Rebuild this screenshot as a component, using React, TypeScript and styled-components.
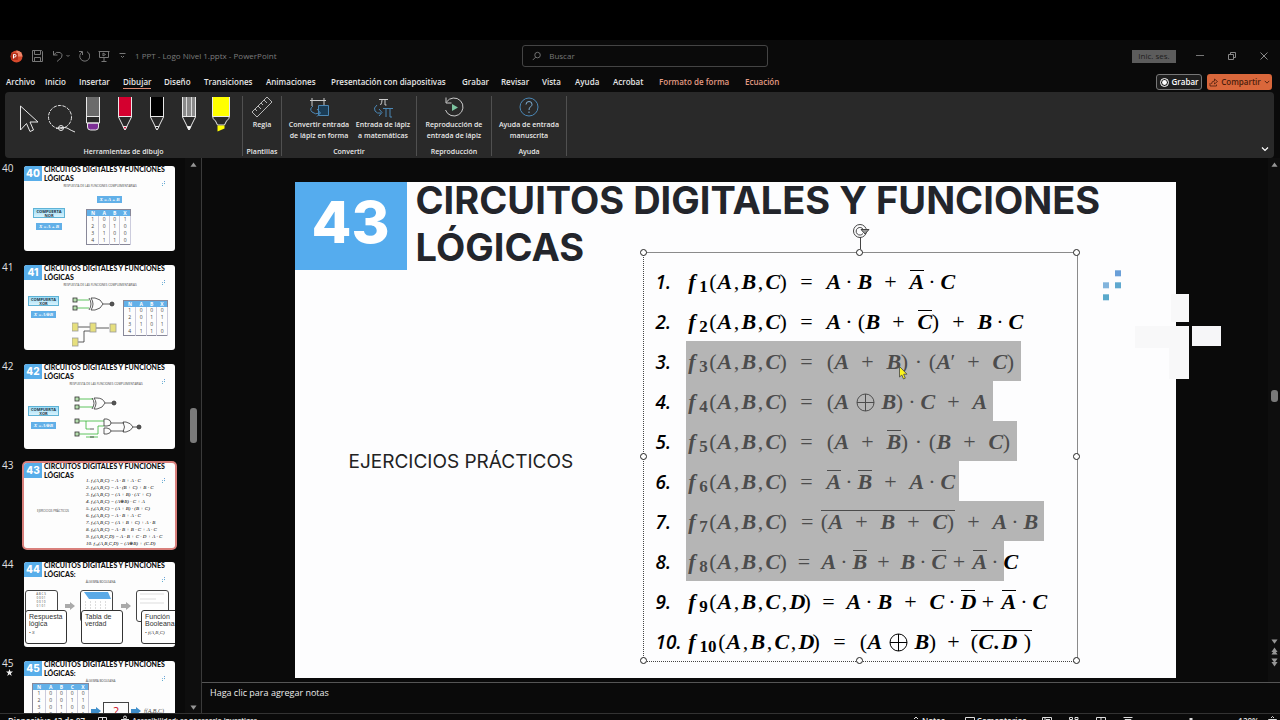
import React from "react";
import styled, { createGlobalStyle, css } from "styled-components";

const UI = `"Open Sans", "Noto Sans", sans-serif`;
const HEAD = `Inter, "Open Sans", sans-serif`;
const MATH = `"Liberation Serif", "DejaVu Sans", serif`;

const GlobalStyle = createGlobalStyle`
  * { box-sizing: border-box; }
  html, body { margin: 0; background: #000; overflow: hidden; }
  body { font-family: ${UI}; color: #e8e8e8; }
  button { font: inherit; color: inherit; background: none; border: 0; padding: 0; margin: 0; }
`;

/* ---------- window frame ---------- */

const Screen = styled.div`
  display: flex;
  flex-direction: column;
  min-height: calc(100vh + 16px);
  padding-top: 40px;
  background: linear-gradient(#000 40px, #0a0a0a 40px);
`;

const TitleBar = styled.header`
  display: grid;
  grid-template-columns: minmax(0, 1fr) 246px minmax(0, 1fr);
  align-items: center;
  height: 32px;
  padding-left: 10px;
  color: #7c7c7c;
`;

const QuickAccess = styled.div`
  display: flex;
  align-items: center;
  gap: 8px;
  svg { display: block; }
`;

const DocName = styled.span`
  font-size: 8px;
  line-height: 12px;
  white-space: nowrap;
`;

const SearchBox = styled.label`
  display: flex;
  align-items: center;
  gap: 8px;
  height: 22px;
  padding: 0 9px;
  border: 1px solid #444;
  border-radius: 3px;
  input {
    width: 100%;
    border: 0;
    outline: 0;
    padding: 0;
    background: none;
    color: #777;
    font: 8px/12px ${UI};
  }
  input::placeholder { color: #777; opacity: 1; }
`;

const WindowButtons = styled.div`
  display: flex;
  justify-content: flex-end;
  align-items: center;
  gap: 24px;
  padding-right: 12px;
  button { display: flex; }
`;

const SignIn = styled.button`
  && {
    width: 44px;
    height: 13px;
    margin-right: -4px;
    justify-content: center;
    align-items: center;
    background: #5c5c5c;
    color: #1c1c1c;
    font-size: 8px;
    line-height: 12px;
  }
`;

const TabBar = styled.nav`
  display: flex;
  align-items: center;
  height: 20px;
  padding: 0 8px 0 6px;
`;

const Tab = styled.button<{ $w: number; $active?: boolean; $context?: boolean }>`
  width: ${(p) => p.$w}px;
  flex: none;
  text-align: left;
  white-space: nowrap;
  font-size: 8px;
  line-height: 12px;
  font-weight: 600;
  color: ${(p) => (p.$context ? "#e39a82" : "#e6e6e6")};
  span {
    display: inline-block;
    border-bottom: 1px solid ${(p) => (p.$active ? "#d98a74" : "transparent")};
  }
`;

const TabActions = styled.div`
  display: flex;
  gap: 5px;
  margin-left: auto;
`;

const ActionButton = styled.button<{ $accent?: boolean }>`
  display: flex;
  align-items: center;
  justify-content: center;
  gap: 3px;
  width: ${(p) => (p.$accent ? 65 : 46)}px;
  height: 16px;
  border-radius: 3px;
  font-size: 8px;
  line-height: 12px;
  font-weight: 600;
  ${(p) =>
    p.$accent
      ? css`background: #d9673b; color: #4a1d0c;`
      : css`background: #1e1e1e; border: 1px solid #777; color: #fff;`}
`;

/* ---------- ribbon ---------- */

const Ribbon = styled.section`
  display: flex;
  height: 66px;
  margin: 0 6px 0 5px;
  padding: 4px 0 2px;
  border-radius: 4px;
  background: #292929;
`;

const Group = styled.div<{ $w: number }>`
  display: flex;
  flex-direction: column;
  width: ${(p) => p.$w}px;
  flex: none;
  border-right: 1px solid #505050;
`;

const GroupBody = styled.div`
  display: flex;
  flex: 1;
  justify-content: center;
`;

const GroupLabel = styled.div`
  text-align: center;
  font-size: 7px;
  line-height: 9px;
  font-weight: 600;
  white-space: nowrap;
`;

const PenTray = styled.div`
  display: flex;
  flex: 1;
  padding-left: 8px;
`;

const Pen = styled.button`
  display: flex;
  justify-content: center;
  width: 32px;
  height: 38px;
  svg { flex: none; }
`;

const BigButton = styled.button<{ $w: number }>`
  display: flex;
  flex-direction: column;
  align-items: center;
  width: ${(p) => p.$w}px;
  font-size: 7px;
  line-height: 11px;
  font-weight: 600;
  text-align: center;
  white-space: pre-line;
  svg { display: block; margin-bottom: 1px; }
`;

const Collapse = styled.button`
  align-self: flex-end;
  margin: 0 5px 3px auto;
  svg { display: block; }
`;

/* ---------- workspace ---------- */

const Workspace = styled.main`
  display: flex;
  height: 555px;
`;

const SlidePanel = styled.aside`
  display: flex;
  width: 202px;
  flex: none;
  border-right: 1px solid #3a3a3a;
`;

const ThumbList = styled.ol`
  flex: 1;
  margin: 0;
  padding: 8px 0 0;
  list-style: none;
  overflow: hidden;
`;

const ThumbRow = styled.li`
  display: flex;
  height: 99px;
  padding-left: 2px;
`;

const ThumbNumber = styled.div`
  width: 22px;
  font-size: 10px;
  line-height: 12px;
  margin-top: -4px;
  color: #e0e0e0;
  svg { display: block; margin: 0 0 0 4px; }
`;

const Thumb = styled.div<{ $selected?: boolean }>`
  position: relative;
  width: 151px;
  height: 85px;
  border-radius: 3px;
  overflow: hidden;
  background: #fdfdfd;
  color: #333;
  ${(p) => p.$selected && css`box-shadow: 0 0 0 2px #d9807c;`}
`;

const ThumbHead = styled.div`
  display: flex;
  gap: 2px;
`;

const ThumbBadge = styled.div`
  width: 18px;
  height: 15px;
  flex: none;
  background: #58aeea;
  color: #fff;
  font: 800 10px/14px ${HEAD};
  text-align: center;
`;

const ThumbTitle = styled.div`
  font: 900 7px/9px Lato, ${HEAD};
  margin-top: -1px;
  color: #111;
  white-space: pre;
`;

const Place = styled.div<{ $x: number; $y: number; $w?: number }>`
  position: absolute;
  left: ${(p) => p.$x}px;
  top: ${(p) => p.$y}px;
  ${(p) => p.$w && `width: ${p.$w}px;`}
  svg { display: block; }
`;

const TinyCaption = styled.div`
  font: 3px/4px ${UI};
  color: #444;
  text-align: center;
  white-space: nowrap;
`;

const GateName = styled.div`
  height: 10px;
  padding-top: 1px;
  border: 1px solid #5fb3d6;
  background: linear-gradient(#9bdcf7, #d8f2fc);
  color: #234;
  font: 700 4px/4px ${UI};
  text-align: center;
`;

const GateFormula = styled.div`
  height: 7px;
  background: #62b0e8;
  color: #fff;
  font: italic 700 5px/7px ${MATH};
  text-align: center;
`;

const GateLabel = styled.div`
  font: italic 6px/8px ${MATH};
  color: #444;
`;

const MiniTable = styled.table`
  width: 100%;
  border-collapse: collapse;
  border: 1px solid #889;
  font: 5px/6px ${UI};
  color: #444;
  text-align: center;
  th { background: #62b0e8; color: #fff; padding: 0; font-weight: 700; }
  td { padding: 0 0 1px; border-right: 1px solid #ccd; }
`;

const MiniFormulas = styled.ol`
  margin: 0;
  padding: 0;
  list-style: none;
  font: italic 400 5px/7px ${MATH};
  color: #000;
  white-space: pre;
`;

const CardBack = styled.div`
  width: 33px;
  height: 32px;
  border: 1px solid #444;
  border-radius: 3px;
  background: #fff;
  overflow: hidden;
`;

const CardFront = styled.div`
  width: 42px;
  height: 34px;
  padding: 2px 2px 2px 3px;
  border: 1px solid #333;
  border-radius: 3px;
  background: #fff;
  font: 7px/7px "Liberation Sans", ${UI};
  white-space: pre-line;
  small { display: block; margin-top: 3px; font: italic 5px/6px ${MATH}; }
`;

const QuestionBox = styled.div`
  width: 26px;
  height: 20px;
  border: 1px solid #444;
  color: #d02030;
  font: 12px/18px ${UI};
  text-align: center;
`;

const ScrollTrack = styled.div<{ $w: number; $end: number }>`
  display: flex;
  flex-direction: column;
  align-items: center;
  gap: 2px;
  width: ${(p) => p.$w}px;
  flex: none;
  padding: 4px 0 ${(p) => p.$end}px;
  background: #0e0e0e;
  svg { display: block; }
`;

const ScrollThumb = styled.div<{ $h: number; $before: number }>`
  width: 7px;
  height: ${(p) => p.$h}px;
  margin-top: ${(p) => p.$before}px;
  margin-bottom: auto;
  border-radius: 3px;
  background: #7a7a7a;
`;

const Editor = styled.div`
  display: flex;
  flex: 1;
  flex-direction: column;
  min-width: 0;
`;

const CanvasRow = styled.div`
  display: flex;
  flex: 1;
`;

const Canvas = styled.div`
  display: flex;
  flex: 1;
  justify-content: center;
  padding-top: 24px;
`;

const Slide = styled.article`
  position: relative;
  width: 881px;
  height: 496px;
  background: #fdfdfe;
  color: #000;
`;

const SlideHead = styled.div`
  display: flex;
  gap: 9px;
`;

const SlideBadge = styled.div`
  width: 112px;
  height: 88px;
  flex: none;
  background: #55acee;
  color: #fff;
  font: 800 58px/80px ${HEAD};
  text-align: center;
`;

const SlideTitle = styled.h1`
  margin: -5px 0 0;
  font: 700 38px/47px ${HEAD};
  color: #23252b;
  white-space: pre;
`;

const SlideText = styled.p`
  margin: 0;
  font: 19px/26px ${HEAD};
  color: #222;
  white-space: nowrap;
`;

const TextBox = styled.div`
  position: absolute;
  left: 348px;
  top: 70px;
  width: 435px;
  height: 410px;
  padding: 8px 0 0 12px;
  border: 1px solid #8b8b8b;
  border-left: 1px dotted #444;
  border-bottom: 1px dotted #444;
`;

const Handle = styled.i<{ $x: string; $y: string }>`
  position: absolute;
  left: ${(p) => p.$x};
  top: ${(p) => p.$y};
  width: 7px;
  height: 7px;
  margin: -4px;
  border: 1px solid #222;
  border-radius: 50%;
  background: #fff;
`;

const Rotator = styled.div`
  position: absolute;
  left: 207px;
  top: -30px;
  svg { display: block; }
`;

const Cursor = styled.div`
  position: absolute;
  left: 604px;
  top: 184px;
  svg { display: block; }
`;

const Exercises = styled.ol`
  margin: 0;
  padding: 0;
  list-style: none;
  font: italic 700 22px/36px ${MATH};
`;

const Exercise = styled.li`
  display: flex;
  height: 40px;
  white-space: nowrap;
`;

const Ordinal = styled.span`
  width: 30px;
  flex: none;
  padding-top: 3px;
  font-family: "Open Sans", sans-serif;
  font-weight: 600;
  font-size: 19px;
`;

const Marked = styled.span<{ $on: boolean; $end?: number }>`
  display: flex;
  padding-top: 3px;
  ${(p) =>
    p.$on &&
    css`background: #b5b5b5; color: #4c4c4c; padding-right: ${p.$end ?? 0}px;`}
`;

const Sym = styled.span<{ $w: number; $plain?: boolean; $right?: boolean }>`
  display: inline-block;
  width: ${(p) => p.$w}px;
  text-align: ${(p) => (p.$right ? "right" : "center")};
  ${(p) => p.$right && css`padding-right: 7px;`}
  ${(p) => p.$plain && css`font-style: normal; font-weight: 400;`}
`;

const Sub = styled.sub<{ $w: number }>`
  display: inline-block;
  width: ${(p) => p.$w}px;
  padding-top: 5px;
  vertical-align: baseline;
  font-size: 17px;
  font-style: normal;
  font-weight: 700;
  text-align: center;
`;

const Bar = styled.span`
  display: inline-flex;
  height: 22px;
  margin-top: 6px;
  border-top: 1px solid currentColor;
  line-height: 22px;
`;

const Ring = styled.span`
  display: inline-flex;
  width: 33px;
  justify-content: center;
  align-items: center;
`;

const Notes = styled.div`
  height: 31px;
  padding: 3px 8px;
  border-top: 1px solid #555;
  font-size: 9px;
  line-height: 14px;
  font-weight: 500;
  color: #ececec;
`;

const StatusBar = styled.footer`
  display: flex;
  align-items: flex-start;
  height: 23px;
  padding: 1px 3px 1px 8px;
  border-top: 1px solid #333;
  font-size: 8px;
  line-height: 12px;
  font-weight: 600;
  white-space: nowrap;
  svg { display: block; }
`;

const StatusGroup = styled.div<{ $gap: number; $lead?: string }>`
  display: flex;
  align-items: flex-start;
  gap: ${(p) => p.$gap}px;
  margin-left: ${(p) => p.$lead ?? "0"};
`;

const StatusItem = styled.button`
  display: flex;
  gap: 2px;
  line-height: 12px;
`;

const AccessNote = styled(StatusItem)`
  font-size: 7px;
`;

/* ---------- formula rendering ----------
   A-D variables, lower case a-d barred variables, . product, * product between
   brackets, + sum, < sum tight on its left, - sum tight on both sides,
   x exclusive or, [ ] a barred run, , decimal point */

const widths: Record<string, number> = { "+": 38, "<": 34, "-": 27, ".": 17, "*": 20, "(": 8, ")": 8, "'": 4, ",": 9, " ": 8 };

function render(src: string): React.ReactNode[] {
  const out: React.ReactNode[] = [];
  for (let i = 0; i < src.length; i++) {
    const c = src[i];
    if (c === "[") {
      const end = src.indexOf("]", i);
      out.push(<Bar key={i}>{render(src.slice(i + 1, end))}</Bar>);
      i = end;
    } else if (/[A-D]/.test(c)) out.push(<Sym key={i} $w={14}>{c}</Sym>);
    else if (/[a-d]/.test(c)) out.push(<Bar key={i}><Sym $w={14}>{c.toUpperCase()}</Sym></Bar>);
    else if (c === "x")
      out.push(
        <Ring key={i}>
          <svg width="19" height="19" viewBox="0 0 19 19" fill="none" stroke="currentColor" aria-label="⊕">
            <circle cx="9.500" cy="9.500" r="8.500" />
            <path d="M1 9.500h17M9.500 1v17" />
          </svg>
        </Ring>
      );
    else {
      const glyph = c === "." || c === "*" ? "·" : c === "<" || c === "-" ? "+" : c === "'" ? "′" : c === "," ? "." : c;
      out.push(<Sym key={i} $w={widths[c]} $plain={c !== ","}>{glyph}</Sym>);
    }
  }
  return out;
}

type Line = { n: number; vars: string; eq: number; body: string; end?: number; rest?: string; snug?: boolean };
const lines: Line[] = [
  { n: 1, vars: "ABC", eq: 40, body: "A.B+a.C" },
  { n: 2, vars: "ABC", eq: 40, body: "A.(B+c)+B.C" },
  { n: 3, vars: "ABC", eq: 40, body: "(A+B)*(A'+C)", end: 6 },
  { n: 4, vars: "ABC", eq: 40, body: "(AxB).C+A", end: 6 },
  { n: 5, vars: "ABC", eq: 40, body: "(A+b)*(B+C)", end: 6 },
  { n: 6, vars: "ABC", eq: 40, body: "a.b+A.C", end: 4 },
  { n: 7, vars: "ABC", eq: 34, body: "[(A+B+C)]+A.B", end: 6, snug: true },
  { n: 8, vars: "ABC", eq: 35, body: "A.b<B.c-a.", rest: "C" },
  { n: 9, vars: "ABCD", eq: 36, body: "A.B+C.d-a.C" },
  { n: 10, vars: "ABCD", eq: 40, body: "(AxB)<[(C,D )]" },
];

function FormulaLine({ n, vars, eq, body, end, rest, snug }: Line) {
  return (
    <Exercise>
      <Ordinal>{n}.</Ordinal>
      <Marked $on={n > 2 && n < 9} $end={end}>
        <Sym $w={13}>f</Sym>
        <Sub $w={n > 9 ? 19 : 10}>{n}</Sub>
        <Sym $w={9} $plain>(</Sym>
        {vars.split("").map((v, i) => (
          <React.Fragment key={v}>
            {i > 0 && <Sym $w={10} $plain>,</Sym>}
            <Sym $w={14}>{v}</Sym>
          </React.Fragment>
        ))}
        <Sym $w={7} $plain>)</Sym>
        <Sym $w={eq} $plain $right={snug}>=</Sym>
        {render(body)}
      </Marked>
      {rest && <Marked $on={false}>{render(rest)}</Marked>}
    </Exercise>
  );
}

/* ---------- small drawings ---------- */

const Chevron = ({ w = 8, color = "currentColor" }: { w?: number; color?: string }) => (
  <svg width={w} height={w} viewBox="0 0 8 8" fill="none" stroke={color} strokeWidth="1.200"><path d="M1 2.500l3 3 3-3" /></svg>
);
const Triangle = ({ up, double }: { up?: boolean; double?: boolean }) => (
  <svg width="7" height={double ? 9 : 6} viewBox={double ? "0 0 8 9" : "0 0 8 6"} fill="#969696">
    {up ? <path d="M4 0l3.500 5h-7z" /> : <path d="M4 5L.5 0h7z" />}
    {double && (up ? <path d="M4 3l3.500 5h-7z" /> : <path d="M4 9L.5 4h7z" />)}
  </svg>
);
const Dots = ({ s }: { s: number }) => (
  <svg width={s} height={s * 1.7} viewBox="0 0 18 30">
    <rect x="12" y="0" width="6" height="6" fill="#6a9fd8" />
    <rect x="0" y="12" width="6" height="6" fill="#82b4dc" />
    <rect x="12" y="12" width="6" height="6" fill="#5fa8cf" />
    <rect x="0" y="24" width="6" height="6" fill="#5aa9cb" />
  </svg>
);
const Arrow = ({ fill }: { fill: string }) => (
  <svg width="10" height="8" viewBox="0 0 10 8" fill={fill}><path d="M0 2h5V0l5 4-5 4V6H0z" /></svg>
);
const PenIcon = ({ fill, ferrule }: { fill: string; ferrule?: boolean }) => (
  <svg width="16" height="36" viewBox="0 0 16 36" fill="none" stroke="#e8e8e8">
    <path d="M1.500 1v20h13V1z" fill={fill} stroke="none" />
    <path d="M1.500 1v20l4.500 9 2 4 2-4 4.500-9V1M1.500 20.500h13" />
    {ferrule ? <path d="M5.500 1v19M10.500 1v19" stroke="#ddd" /> : null}
    <path d="M6 30.500h4L8 34z" fill={ferrule ? "#fff" : fill} />
  </svg>
);

function GateDrawing41() {
  return (
    <svg width="72" height="58" viewBox="0 0 72 58" fill="none" stroke="#333" strokeWidth="0.800">
      <path d="M5 7h12M5 15h12" stroke="#35b535" />
      <path d="M17 5q4 6 0 12M19 5q4 6 0 12h4q6-1 8-6-2-5-8-6zM31 11h7" />
      <g fill="#b7dfb0"><rect x="1" y="5" width="4" height="4" /><rect x="1" y="13" width="4" height="4" /></g>
      <circle cx="40" cy="11" r="2" fill="#555" />
      <path d="M5 34h14M5 49h7V38h7M24 35h13" />
      <g fill="#e6df7d" stroke="#999"><rect x="0" y="30" width="6" height="8" /><rect x="0" y="45" width="6" height="8" /><rect x="18" y="30" width="6" height="9" /><rect x="38" y="31" width="6" height="8" /></g>
    </svg>
  );
}
function GateDrawing42() {
  return (
    <svg width="72" height="50" viewBox="0 0 72 50" fill="none" stroke="#333" strokeWidth="0.800">
      <path d="M5 5h14M5 13h14M5 27h25M12 27v8h4M5 40h19v-8h6M12 43h12" stroke="#35b535" />
      <path d="M18 4q4 5 0 11M20 4q4 5 0 11h3q6-1 8-6-2-5-8-5zM31 9h7M30 25h3q4 1 4 4t-4 3h-3zM30 34h3q4 1 4 3t-4 3h-3zM37 29h13M37 37h13M49 28q3 5 0 10h3q5-1 7-5-2-4-7-5zM59 33h4M16 35h4M16 43h4" />
      <g fill="#b7dfb0"><rect x="1" y="3" width="4" height="4" /><rect x="1" y="11" width="4" height="4" /><rect x="1" y="25" width="4" height="4" /><rect x="1" y="38" width="4" height="4" /></g>
      <circle cx="40" cy="9" r="2" fill="#555" /><circle cx="65" cy="33" r="2" fill="#555" />
    </svg>
  );
}

const Truth = ({ head, rows }: { head: string; rows: string[] }) => (
  <MiniTable>
    <thead><tr>{head.split("").map((h, i) => <th key={i}>{h}</th>)}</tr></thead>
    <tbody>{rows.map((r) => <tr key={r}>{r.split("").map((v, i) => <td key={i}>{v}</td>)}</tr>)}</tbody>
  </MiniTable>
);

const miniLines = [
  "1. f₁(A,B,C) = A · B + A · C", "2. f₂(A,B,C) = A · (B + C) + B · C", "3. f₃(A,B,C) = (A + B) · (A′ + C)",
  "4. f₄(A,B,C) = (A⊕B) · C + A", "5. f₅(A,B,C) = (A + B) · (B + C)", "6. f₆(A,B,C) = A · B + A · C",
  "7. f₇(A,B,C) = (A + B + C) + A · B", "8. f₈(A,B,C) = A · B + B · C + A · C", "9. f₉(A,B,C,D) = A · B + C · D + A · C",
  "10. f₁₀(A,B,C,D) = (A⊕B) + (C.D)",
];

function ThumbItem({ n, colon, children }: { n: number; colon?: boolean; children: React.ReactNode }) {
  return (
    <ThumbRow>
      <ThumbNumber>
        {n}
        {n === 45 && <svg width="7" height="7" viewBox="0 0 10 10" fill="#eee"><path d="M5 0l1.300 3.600H10L7 5.900 8.100 10 5 7.500 1.900 10 3 5.900 0 3.600h3.700z" /></svg>}
      </ThumbNumber>
      <Thumb $selected={n === 43}>
        <ThumbHead>
          <ThumbBadge>{n}</ThumbBadge>
          <ThumbTitle>{"CIRCUITOS DIGITALES Y FUNCIONES\nLÓGICAS" + (colon ? ":" : "")}</ThumbTitle>
        </ThumbHead>
        <Place $x={138} $y={15}><Dots s={3} /></Place>
        {children}
      </Thumb>
    </ThumbRow>
  );
}

const Caption = ({ text, x, w }: { text: string; x: number; w: number }) => (
  <Place $x={x} $y={18} $w={w}><TinyCaption>{text}</TinyCaption></Place>
);
const complement = "RESPUESTA DE LAS FUNCIONES COMPLEMENTARIAS";

const tabs: [string, number][] = [
  ["Archivo", 39], ["Inicio", 34], ["Insertar", 44], ["Dibujar", 41], ["Diseño", 40], ["Transiciones", 62],
  ["Animaciones", 65], ["Presentación con diapositivas", 131], ["Grabar", 39], ["Revisar", 41], ["Vista", 33],
  ["Ayuda", 38], ["Acrobat", 46], ["Formato de forma", 86], ["Ecuación", 40],
];

export default function App() {
  return (
    <Screen>
      <GlobalStyle />
      <TitleBar>
        <QuickAccess>
          <svg width="13" height="13" viewBox="0 0 13 13"><circle cx="6.500" cy="6.500" r="6" fill="#d6492c" /><path d="M6.500.5a6 6 0 016 6h-6z" fill="#f0876a" /><rect x="1" y="3" width="7" height="7" rx="1" fill="#b5301a" /><path d="M3.500 8.500v-4h1.300a1.200 1.200 0 010 2.500H3.500" fill="none" stroke="#fff" /></svg>
          <svg width="13" height="12" viewBox="0 0 13 12" fill="none" stroke="#777"><path d="M1.500.5h9l1 1v10h-10zM3.500.5v4h6v-4M3.500 11.500v-4h6v4" /></svg>
          <svg width="18" height="12" viewBox="0 0 18 12" fill="none" stroke="#777"><path d="M1.500 1v4h4M1.500 5q3-4 6.500-2.500t1.500 5L5 11.500M14.500 5l1.500 1.500L17.500 5" /></svg>
          <svg width="12" height="12" viewBox="0 0 12 12" fill="none" stroke="#777"><path d="M1 1.500h3.500V5M4 2a5 5 0 105-.3" /></svg>
          <svg width="12" height="12" viewBox="0 0 12 12" fill="none" stroke="#777"><path d="M.5 1.500h11M1.500 1.500v6h9v-6M6 7.500v4M3.500 11.500h5M5 3v3l2.500-1.500z" /></svg>
          <svg width="9" height="6" viewBox="0 0 9 6" fill="none" stroke="#777"><path d="M1.500.5h6M3 3l1.500 1.500L6 3" /></svg>
          <DocName>1 PPT - Logo Nivel 1.pptx  -  PowerPoint</DocName>
        </QuickAccess>
        <SearchBox>
          <svg width="10" height="10" viewBox="0 0 10 10" fill="none" stroke="#777"><circle cx="6" cy="4" r="3" /><path d="M4 6.200L.8 9.400" /></svg>
          <input placeholder="Buscar" aria-label="Buscar" />
        </SearchBox>
        <WindowButtons>
          <SignIn>Inic. ses.</SignIn>
          <button aria-label="Minimizar"><svg width="8" height="8" viewBox="0 0 8 8" stroke="#777"><path d="M0 3.500h8" /></svg></button>
          <button aria-label="Restaurar"><svg width="8" height="8" viewBox="0 0 8 8" fill="none" stroke="#888"><path d="M.5 2.500h5v5h-5zM2.500 2V.5h5v5H6" /></svg></button>
          <button aria-label="Cerrar"><svg width="8" height="8" viewBox="0 0 8 8" stroke="#888"><path d="M.5.5l7 7M7.500.5l-7 7" /></svg></button>
        </WindowButtons>
      </TitleBar>

      <TabBar>
        {tabs.map(([label, w], i) => (
          <Tab key={label} $w={w} $active={label === "Dibujar"} $context={i > 12}><span>{label}</span></Tab>
        ))}
        <TabActions>
          <ActionButton>
            <svg width="9" height="9" viewBox="0 0 9 9"><circle cx="4.500" cy="4.500" r="4" fill="none" stroke="#fff" /><circle cx="4.500" cy="4.500" r="2.400" fill="#fff" /></svg>
            Grabar
          </ActionButton>
          <ActionButton $accent>
            <svg width="9" height="9" viewBox="0 0 9 9" fill="none" stroke="#4a1d0c"><path d="M1 5v3h6.500V6.500M2.500 6q0-3 3-3V1l3 2.500-3 2.500V4.500" strokeWidth=".8" /></svg>
            Compartir
            <Chevron w={6} />
          </ActionButton>
        </TabActions>
      </TabBar>

      <Ribbon>
        <Group $w={238}>
          <PenTray>
            <Pen aria-label="Seleccionar"><svg width="20" height="36" viewBox="0 0 20 36" fill="none" stroke="#e8e8e8"><path d="M1.500 10v24l6-6.500 3.500 8 3.500-1.500-3.500-8h8z" /></svg></Pen>
            <Pen aria-label="Lazo"><svg width="30" height="38" viewBox="0 0 30 38" fill="none" stroke="#e8e8e8"><circle cx="14" cy="21" r="11.500" strokeDasharray="3.500 1.200" /><circle cx="15" cy="32" r="2.500" /><path d="M10 32.500q9-2 12 0t7 3.500" /></svg></Pen>
            <Pen aria-label="Borrador"><svg width="16" height="36" viewBox="0 0 16 36" fill="none" stroke="#e8e8e8"><path d="M1 1h14v20H1z" fill="#6b6b6b" stroke="none" /><path d="M2.500 27h11v4q0 3-3 3h-5q-3 0-3-3z" fill="#7d2f96" /><path d="M1.500 1v26h13V1M1.500 20.500h13" /></svg></Pen>
            <Pen aria-label="Lápiz rojo"><PenIcon fill="#d4002f" /></Pen>
            <Pen aria-label="Lápiz negro"><PenIcon fill="#000" /></Pen>
            <Pen aria-label="Lápiz gris"><PenIcon fill="#8a8a8a" ferrule /></Pen>
            <Pen aria-label="Marcador"><svg width="20" height="36" viewBox="0 0 20 36" fill="none" stroke="#e8e8e8"><path d="M1 1h18v19H1z" fill="#ff0" stroke="none" /><path d="M1.500 1v19q0 3 3 5l2 4h7l2-4q3-2 3-5V1M1.500 20.500h17" /><path d="M6.500 29.500h7v3l-7 3z" fill="#ff0" stroke="none" /></svg></Pen>
          </PenTray>
          <GroupLabel>Herramientas de dibujo</GroupLabel>
        </Group>
        <Group $w={39}>
          <GroupBody>
            <BigButton $w={38}>
              <svg width="22" height="22" viewBox="0 0 22 22" fill="none" stroke="#b8b8b8"><path d="M1 16L16 1l5 5L6 21zM4 13l2 2M7 10l3 3M10 7l2 2M13 4l3 3" /></svg>
              Regla
            </BigButton>
          </GroupBody>
          <GroupLabel>Plantillas</GroupLabel>
        </Group>
        <Group $w={135}>
          <GroupBody>
            <BigButton $w={68}>
              <svg width="22" height="22" viewBox="0 0 22 22" fill="none" stroke="#ccc"><path d="M4 4v6M16 4v5M2 4.500h16M4 2v2M16 2v2" /><path d="M10.500 9.500h10v10h-10z" fill="#1b3c55" stroke="#4b87b5" /><path d="M5 10q-4 3-1 6t8 1M9 13l3.500 4L9 20.500" stroke="#4b87b5" /></svg>
              {"Convertir entrada\nde lápiz en forma"}
            </BigButton>
            <BigButton $w={60}>
              <svg width="22" height="22" viewBox="0 0 22 22" fill="none" stroke="#ccc"><path d="M7 3.500h9M10 4q0 3-1.500 5M13 4v5h1.500" /><path d="M11 12.500h10M14 13v8M18 13v8h2M5 9q-4 3-2 6t6 2M7 13l3 3.500L7 20" stroke="#4b87b5" /></svg>
              {"Entrada de lápiz\na matemáticas"}
            </BigButton>
          </GroupBody>
          <GroupLabel>Convertir</GroupLabel>
        </Group>
        <Group $w={75}>
          <GroupBody>
            <BigButton $w={72}>
              <svg width="22" height="22" viewBox="0 0 22 22" fill="none" stroke="#ccc"><path d="M3.500 6a9 9 0 11-1 8M3 1.500V7h5.500" /><path d="M9 8l6 3.500L9 15z" fill="#7dc4a0" stroke="none" /></svg>
              {"Reproducción de\nentrada de lápiz"}
            </BigButton>
          </GroupBody>
          <GroupLabel>Reproducción</GroupLabel>
        </Group>
        <Group $w={75}>
          <GroupBody>
            <BigButton $w={72}>
              <svg width="22" height="22" viewBox="0 0 22 22" fill="none" stroke="#4b87b5"><circle cx="11" cy="11" r="9" /><path d="M8 8.500q0-3 3-3t3 2.800q0 1.500-1.500 2.500T11 14M11 15.500V17" stroke="#7fb0d6" /></svg>
              {"Ayuda de entrada\nmanuscrita"}
            </BigButton>
          </GroupBody>
          <GroupLabel>Ayuda</GroupLabel>
        </Group>
        <Collapse aria-label="Contraer la cinta"><Chevron color="#fff" /></Collapse>
      </Ribbon>

      <Workspace>
        <SlidePanel>
          <ThumbList>
            <ThumbItem n={40}>
              <Caption text={complement} x={36} w={80} />
              <Place $x={73} $y={30} $w={25}><GateFormula>X = A + B</GateFormula></Place>
              <Place $x={9} $y={42} $w={32}><GateName>COMPUERTA NOR</GateName></Place>
              <Place $x={12} $y={57} $w={26}><GateFormula>X = A + B</GateFormula></Place>
              <Place $x={62} $y={43} $w={45}><Truth head="NABX" rows={["1001", "2010", "3100", "4110"]} /></Place>
            </ThumbItem>
            <ThumbItem n={41}>
              <Caption text={complement} x={36} w={80} />
              <Place $x={4} $y={31} $w={31}><GateName>COMPUERTA XOR</GateName></Place>
              <Place $x={7} $y={46} $w={25}><GateFormula>X = A⊕B</GateFormula></Place>
              <Place $x={48} $y={28}><GateDrawing41 /></Place>
              <Place $x={99} $y={35} $w={45}><Truth head="NABX" rows={["1000", "2011", "3101", "4110"]} /></Place>
            </ThumbItem>
            <ThumbItem n={42}>
              <Caption text={complement} x={42} w={80} />
              <Place $x={4} $y={42} $w={31}><GateName>COMPUERTA XOR</GateName></Place>
              <Place $x={7} $y={58} $w={25}><GateFormula>X = A⊕B</GateFormula></Place>
              <Place $x={50} $y={30}><GateDrawing42 /></Place>
            </ThumbItem>
            <ThumbItem n={43}>
              <Place $x={9} $y={46} $w={40}><TinyCaption>EJERCICIOS PRÁCTICOS</TinyCaption></Place>
              <Place $x={62} $y={14}><MiniFormulas>{miniLines.map((t) => <li key={t}>{t}</li>)}</MiniFormulas></Place>
            </ThumbItem>
            <ThumbItem n={44} colon>
              <Caption text="ÁLGEBRA BOOLEANA" x={56} w={41} />
              <Place $x={1} $y={28}><CardBack /></Place>
              <Place $x={4} $y={30} $w={26}><TinyCaption>A B C S<br />0 0 0 1<br />0 0 1 0<br />0 1 0 1</TinyCaption></Place>
              <Place $x={56} $y={28}><CardBack><svg width="31" height="20" viewBox="0 0 31 20"><path d="M3 1h24l3 7H8z" fill="#5aa9e6" /><path d="M4 11h23M4 14h23M4 17h23" stroke="#bbb" strokeDasharray="1 4" /></svg></CardBack></Place>
              <Place $x={112} $y={28}><CardBack><svg width="31" height="20" viewBox="0 0 31 20"><path d="M3 3h24M3 8h16M3 12h24" stroke="#ddd" /></svg></CardBack></Place>
              <Place $x={41} $y={40}><Arrow fill="#aaa" /></Place>
              <Place $x={97} $y={40}><Arrow fill="#aaa" /></Place>
              <Place $x={1} $y={48}><CardFront>{"Respuesta\nlógica"}<small>• S</small></CardFront></Place>
              <Place $x={57} $y={48}><CardFront>{"Tabla de\nverdad"}</CardFront></Place>
              <Place $x={117} $y={48}><CardFront>{"Función\nBooleana"}<small>• f(A,B,C)</small></CardFront></Place>
            </ThumbItem>
            <ThumbItem n={45} colon>
              <Caption text="ÁLGEBRA BOOLEANA" x={56} w={41} />
              <Place $x={8} $y={22} $w={57}><Truth head="NABCX" rows={["10000", "20011", "30100", "40111"]} /></Place>
              <Place $x={67} $y={46}><Arrow fill="#3f8fcb" /></Place>
              <Place $x={79} $y={41}><QuestionBox>?</QuestionBox></Place>
              <Place $x={107} $y={46}><Arrow fill="#3f8fcb" /></Place>
              <Place $x={120} $y={46}><GateLabel>f(A,B,C)</GateLabel></Place>
            </ThumbItem>
          </ThumbList>
          <ScrollTrack $w={16} $end={2}>
            <Triangle up />
            <ScrollThumb $h={35} $before={238} />
            <Triangle />
          </ScrollTrack>
        </SlidePanel>

        <Editor>
          <CanvasRow>
            <Canvas>
              <Slide>
                <SlideHead>
                  <SlideBadge>43</SlideBadge>
                  <SlideTitle>{"CIRCUITOS DIGITALES Y FUNCIONES\nLÓGICAS"}</SlideTitle>
                </SlideHead>
                <Place $x={54} $y={267}><SlideText>EJERCICIOS PRÁCTICOS</SlideText></Place>
                <Place $x={808} $y={88}><Dots s={18} /></Place>
                <Place $x={840} $y={112}>
                  <svg width="87" height="85" viewBox="0 0 87 85">
                    <path d="M36 0h18v28H36zM0 32h54v53H34V54H0z" fill="#f8f8f9" />
                    <path d="M57 32h29v20H57z" fill="#f6f6f8" />
                    <path d="M41 28h13v4H41z" fill="#0a0a0a" />
                  </svg>
                </Place>
                <TextBox>
                  <Exercises>{lines.map((l) => <FormulaLine key={l.n} {...l} />)}</Exercises>
                  {["0%", "50%", "100%"].flatMap((x) => ["0%", "50%", "100%"].filter((y) => x !== "50%" || y !== "50%").map((y) => <Handle key={x + y} $x={x} $y={y} />))}
                  <Rotator>
                    <svg width="20" height="27" viewBox="0 0 20 27" fill="none" stroke="#444"><path d="M9.500 14v12" /><circle cx="9" cy="8" r="6.500" /><path d="M12 10.500a3.800 3.800 0 11.300-4" /><path d="M10 6.500h8L14 11z" fill="#999" /></svg>
                  </Rotator>
                </TextBox>
                <Cursor>
                  <svg width="9" height="14" viewBox="0 0 9 14"><path d="M.5.5v10.500l2.300-2 1.700 4 1.800-.8-1.600-4H8z" fill="#fdf51c" stroke="#444" strokeWidth=".8" /></svg>
                </Cursor>
              </Slide>
            </Canvas>
            <ScrollTrack $w={12} $end={15}>
              <Triangle up />
              <ScrollThumb $h={12} $before={220} />
              <Triangle />
              <Triangle up double />
              <Triangle double />
            </ScrollTrack>
          </CanvasRow>
          <Notes>Haga clic para agregar notas</Notes>
        </Editor>
      </Workspace>

      <StatusBar>
        <StatusGroup $gap={13}>
          <span>Diapositiva 43 de 97</span>
          <svg width="9" height="9" viewBox="0 0 9 9" fill="none" stroke="#ddd"><path d="M.5 2.500h8v6h-8zM4.500 2v7" /></svg>
          <AccessNote>
            <svg width="10" height="10" viewBox="0 0 10 10" fill="none" stroke="#ddd"><circle cx="5" cy="2.500" r="1.500" /><path d="M1 4.500h8M4 5v4M6 5v4" /></svg>
            Accesibilidad: es necesario investigar
          </AccessNote>
        </StatusGroup>
        <StatusGroup $gap={20} $lead="auto">
          <StatusItem>
            <svg width="8" height="9" viewBox="0 0 8 9" fill="none" stroke="#ddd"><path d="M2 4l2-2 2 2M0 6.500h8" /></svg>
            Notas
          </StatusItem>
          <StatusItem>
            <svg width="10" height="10" viewBox="0 0 10 10" fill="none" stroke="#ddd"><path d="M.5 2.500h9v6h-9z" /></svg>
            Comentarios
          </StatusItem>
        </StatusGroup>
        <StatusGroup $gap={17} $lead="16px">
          <svg width="10" height="10" viewBox="0 0 10 10" fill="none" stroke="#ddd"><path d="M.5 2.500h9v6h-9zM3 2v7M4 4.500h4" /></svg>
          <svg width="10" height="10" viewBox="0 0 10 10" fill="none" stroke="#ddd"><path d="M.5 2.500h3v2h-3zM6 2.500h3v2H6zM.5 7.500h3v2h-3zM6 7.500h3v2H6z" /></svg>
          <svg width="10" height="10" viewBox="0 0 10 10" fill="none" stroke="#ddd"><path d="M.5 2.500h9v6h-9zM5 2v7" /></svg>
          <svg width="10" height="10" viewBox="0 0 10 10" fill="none" stroke="#ddd"><path d="M.5 2.500h9M2 4.500h6v4H2z" /></svg>
        </StatusGroup>
        <StatusGroup $gap={9} $lead="15px">
          <svg width="81" height="10" viewBox="0 0 81 10" stroke="#ddd" strokeWidth="1"><path d="M0 7h80" /><path d="M43 3v7" strokeWidth="3" /></svg>
          <span>120%</span>
          <svg width="9" height="10" viewBox="0 0 9 10" fill="none" stroke="#ddd"><path d="M.5 4.500h8v5h-8zM3 3l1.500-1.500L6 3" /></svg>
        </StatusGroup>
      </StatusBar>
    </Screen>
  );
}
